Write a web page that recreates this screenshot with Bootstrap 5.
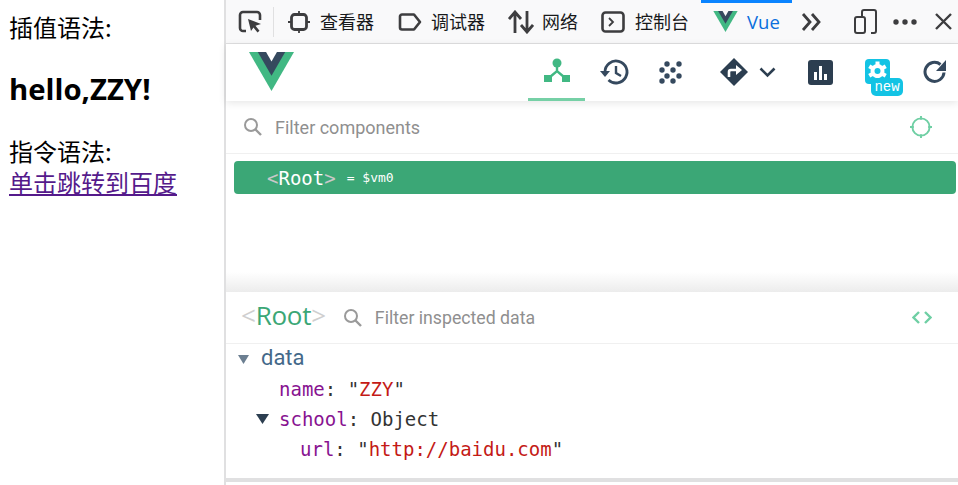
<!DOCTYPE html>
<html lang="zh">
<head>
<meta charset="utf-8">
<title>Vue devtools</title>
<link href="https://cdn.jsdelivr.net/npm/bootstrap@5.3.0/dist/css/bootstrap.min.css" rel="stylesheet">
<style>
html,body{height:485px;overflow:hidden;background:#fff}
.shell{height:485px;font-family:"Noto Sans CJK SC","Liberation Sans",sans-serif}
.page-pane{width:224px;flex:none;padding:11px 0 0 9px;font-size:24px;line-height:32px;color:#000;font-family:"Noto Sans CJK SC",sans-serif}
.page-pane .hello{font-family:"Open Sans",sans-serif;font-weight:700;font-size:29.3px;line-height:38px;margin:28px 0 27px;letter-spacing:0}
.page-pane a{color:#551a8b;display:block;line-height:31px}
.page-pane .l1{height:31px}
.dev{width:734px;flex:none;border-left:2px solid #e0e0e1}
.tools{height:44px;background:#f9f9fa;border-bottom:1px solid #e0e0e1;font-size:18px;color:#18191a;flex:none}
.tools svg{display:block;flex:none}
.tab{height:43px;display:flex;align-items:center;flex:none}
.sepr{width:1px;height:30px;background:#e0e0e1;flex:none}
.vuetab{width:91px;height:43px;border-top:3px solid #0a84ff;color:#0a6fdd;font-family:"Open Sans",sans-serif;font-size:18.5px;padding-left:12px;gap:9px;margin-left:12px;padding-bottom:3px}
.vhead{height:57px;flex:none;position:relative;z-index:2;box-shadow:0 2px 8px rgba(0,0,0,.1)}
.vhead svg{display:block;flex:none}
.active-tab{width:57px;height:57px;border-bottom:3px solid #76d0a6;margin-left:234px}
.search{height:53px;flex:none;border-bottom:1px solid #f0f0f0;color:#8f8f8f;font-family:Roboto,sans-serif;font-size:18px;padding:0 0 0 17px}
.tree{height:138px;flex:none;padding:7px 2px 0 8px;background:linear-gradient(#fff 118px,#ececec 138px)}
.rootrow{height:33px;background:#3ba776;border-radius:4px;color:#fff;padding:1px 0 0 33px;font-family:"DejaVu Sans Mono",monospace}
.rootrow .nm{font-size:19px}
.rootrow .br{color:#c8c8c8;font-size:19px}
.rootrow .eq{font-size:13px;margin-left:11px}
.insp{height:52px;flex:none;border-bottom:1px solid #f0f0f0;padding-left:15px;font-family:Roboto,sans-serif;color:#8f8f8f;font-size:17.7px}
.insp .tg{font-family:"Open Sans",sans-serif;font-size:26px;color:#cfcfcf;letter-spacing:-.25px;line-height:1;margin:-6px 17px 0 0}
.insp .tg b{font-weight:400;color:#3ba776}
.state{flex:1;font-family:"DejaVu Sans Mono",monospace;font-size:19px;color:#333;position:relative}
.drow{height:30px;white-space:pre}
.drow svg{flex:none}
.dname{font-family:Roboto,sans-serif;font-size:22px;color:#44698a;margin:-4px 0 0 12px}
.k{color:#881391}
.v{color:#c41a16}
.l0{padding-left:12px}.l1b{padding-left:53px}.l2{padding-left:30px}
.l3{padding-left:74px}
.endline{height:4px;background:#e0e0e1;flex:none;margin-bottom:3px}
.newtag{left:6px;top:19px;width:32px;background:#13c3e4;color:#fff;font:14px/18px "Liberation Mono",monospace;text-align:center;border-radius:5px;white-space:nowrap}
.gearbox{margin:15px 0 0 32px;width:25px;height:25px}
</style>
</head>
<body>
<div class="shell d-flex">
  <div class="page-pane">
    <div class="l1">插值语法:</div>
    <div class="hello">hello,ZZY!</div>
    <div class="l1">指令语法:</div>
    <a href="#">单击跳转到百度</a>
  </div>
  <div class="dev d-flex flex-column">
    <div class="tools d-flex align-items-center">
      <svg style="margin-left:12px" width="24" height="24" viewBox="0 0 24 24"><path d="M8 21H5a3 3 0 0 1-3-3V5a3 3 0 0 1 3-3h14a3 3 0 0 1 3 3v5" fill="none" stroke="#3d3d3f" stroke-width="2.6"/><path d="M10 9l13 5-5.500 1.800 4 5-2 1.700-4-5-2.500 3.500z" fill="#3d3d3f"/></svg>
      <div class="sepr" style="margin-left:11px"></div>
      <svg style="margin-left:13px" width="24" height="24" viewBox="0 0 24 24"><rect x="4.500" y="4.500" width="15" height="15" rx="3" fill="none" stroke="#3d3d3f" stroke-width="2.800"/><path d="M12 1v3M12 20v3M1 12h3M20 12h3" stroke="#3d3d3f" stroke-width="1.800"/></svg>
      <div class="tab" style="margin-left:9px">查看器</div>
      <svg style="margin-left:24px" width="24" height="20" viewBox="0 0 24 20"><path d="M4 2.500h12l6 7.500-6 7.500H4a2 2 0 0 1-2-2v-11a2 2 0 0 1 2-2z" fill="none" stroke="#3d3d3f" stroke-width="2.600" stroke-linejoin="round"/></svg>
      <div class="tab" style="margin-left:9px">调试器</div>
      <svg style="margin-left:23px" width="26" height="24" viewBox="0 0 26 24"><path d="M7 23V3M1 9l6-7 6 7M19 1v20M13 15l6 7 6-7" fill="none" stroke="#3d3d3f" stroke-width="2.800"/></svg>
      <div class="tab" style="margin-left:8px">网络</div>
      <svg style="margin-left:23px" width="24" height="22" viewBox="0 0 24 22"><rect x="1.500" y="1.500" width="21" height="19" rx="3" fill="none" stroke="#3d3d3f" stroke-width="2.600"/><path d="M8 7l4 4-4 4" fill="none" stroke="#3d3d3f" stroke-width="1.800"/></svg>
      <div class="tab" style="margin-left:10px">控制台</div>
      <div class="tab vuetab">
        <svg width="25" height="21" viewBox="0 0 256 221"><path d="M0 0h256L128 221z" fill="#41b883"/><path d="M50 0h156l-78 134z" fill="#35495e"/><path d="M97 0h62l-31 54z" fill="#f9f9fa"/></svg>
        <span>Vue</span>
      </div>
      <svg style="margin-left:9px" width="20" height="20" viewBox="0 0 20 20"><path d="M2 2l7 8-7 8M11 2l7 8-7 8" fill="none" stroke="#3d3d3f" stroke-width="2.800"/></svg>
      <svg style="margin-left:33px" width="23" height="25" viewBox="0 0 23 25"><path d="M8 8V3a2 2 0 0 1 2-2h10a2 2 0 0 1 2 2v19a2 2 0 0 1-2 2h-3" fill="none" stroke="#3d3d3f" stroke-width="2"/><rect x="1" y="8" width="10" height="16" rx="2" fill="none" stroke="#3d3d3f" stroke-width="2"/></svg>
      <svg style="margin-left:16px" width="24" height="6" viewBox="0 0 24 6"><circle cx="3" cy="3" r="2.700" fill="#3d3d3f"/><circle cx="12" cy="3" r="2.700" fill="#3d3d3f"/><circle cx="21" cy="3" r="2.700" fill="#3d3d3f"/></svg>
      <svg style="margin-left:18px" width="17" height="17" viewBox="0 0 17 17"><path d="M1 1l15 15M16 1L1 16" stroke="#3d3d3f" stroke-width="2.400"/></svg>
    </div>
    <div class="vhead d-flex bg-white">
      <svg style="margin:8px 0 0 23px" width="45" height="39" viewBox="0 0 256 221"><path d="M0 0h256L128 221z" fill="#41b883"/><path d="M50 0h156l-78 134z" fill="#35495e"/><path d="M97 0h62l-31 54z" fill="#fff"/></svg>
      <div class="active-tab d-flex justify-content-center align-items-center">
        <svg style="margin-top:-2px" width="26" height="25" viewBox="0 0 26 25"><circle cx="13" cy="5" r="4.500" fill="#41b883"/><rect x="0" y="17" width="8" height="7" fill="#41b883"/><rect x="18" y="17" width="8" height="7" fill="#41b883"/><path d="M13 8v6M6 19l7-6 7 6" fill="none" stroke="#41b883" stroke-width="2.400"/></svg>
      </div>
      <svg style="margin:14px 0 0 15px" width="30" height="28" viewBox="0 0 30 28"><path d="M5 14a11 11 0 1 1 3.500 8" fill="none" stroke="#35495e" stroke-width="2.800"/><path d="M0 13h10l-5 6z" fill="#35495e"/><path d="M16 8v7l5 3" fill="none" stroke="#35495e" stroke-width="2.400"/></svg>
      <svg style="margin:17px 0 0 29px" width="24" height="23" viewBox="0 0 24 23"><g fill="#35495e"><circle cx="8" cy="3" r="2.700"/><circle cx="20" cy="3" r="2.700"/><circle cx="3" cy="9" r="2.700"/><circle cx="14" cy="9" r="2.700"/><circle cx="8" cy="15" r="2.700"/><circle cx="20" cy="15" r="2.700"/><circle cx="3" cy="20" r="2.700"/><circle cx="14" cy="20" r="2.700"/></g></svg>
      <svg style="margin:14px 0 0 37px" width="28" height="28" viewBox="0 0 28 28"><path d="M14 0l14 14-14 14L0 14z" fill="#2c3e50"/><path d="M9 19v-5a2 2 0 0 1 2-2h6" fill="none" stroke="#fff" stroke-width="2.600"/><path d="M16 7l6 5-6 5z" fill="#fff"/></svg>
      <svg style="margin:23px 0 0 11px" width="17" height="11" viewBox="0 0 17 11"><path d="M1.500 1.500l7 7 7-7" fill="none" stroke="#2c3e50" stroke-width="2.600"/></svg>
      <svg style="margin:16px 0 0 32px" width="25" height="25" viewBox="0 0 25 25"><rect width="25" height="25" rx="3" fill="#2c3e50"/><path d="M6 12h3v8H6zM11 6h3v14h-3zM16 14h3v6h-3z" fill="#fff"/></svg>
      <div class="gearbox position-relative">
        <svg class="d-block" width="25" height="25" viewBox="0 0 25 25"><rect width="25" height="25" rx="4" fill="#13c3e4"/><g fill="#fff"><circle cx="12.500" cy="12" r="7"/><rect x="10.500" y="2.500" width="4" height="19"/><rect x="10.500" y="2.500" width="4" height="19" transform="rotate(60 12.500 12)"/><rect x="10.500" y="2.500" width="4" height="19" transform="rotate(120 12.500 12)"/></g><circle cx="12.500" cy="12" r="3" fill="#13c3e4"/></svg>
        <span class="newtag position-absolute">new</span>
      </div>
      <svg style="margin:16px 0 0 33px" width="24" height="24" viewBox="0 0 24 24"><path d="M21 12.500A9.500 9.500 0 1 1 17.500 4.500" fill="none" stroke="#35495e" stroke-width="3"/><path d="M23 0v11h-10z" fill="#35495e"/></svg>
    </div>
    <div class="search d-flex align-items-center">
      <svg width="20" height="20" viewBox="0 0 20 20"><circle cx="8" cy="8" r="6" fill="none" stroke="#9a9a9a" stroke-width="2"/><path d="M12.500 12.500l5.500 5.500" stroke="#9a9a9a" stroke-width="2.400"/></svg>
      <span style="margin-left:12px;padding-top:1px">Filter components</span>
      <svg class="ms-auto" style="margin-right:26px" width="22" height="22" viewBox="0 0 23 23"><circle cx="11.500" cy="11.500" r="9" fill="none" stroke="#6fcfa4" stroke-width="2"/><path d="M11.500 0v4M11.500 19v4M0 11.500h4M19 11.500h4" stroke="#6fcfa4" stroke-width="2"/></svg>
    </div>
    <div class="tree">
      <div class="rootrow d-flex align-items-center">
        <span class="br">&lt;</span><span class="nm">Root</span><span class="br">&gt;</span><span class="eq">= $vm0</span>
      </div>
    </div>
    <div class="insp d-flex align-items-center">
      <span class="tg">&lt;<b>Root</b>&gt;</span>
      <svg width="20" height="20" viewBox="0 0 20 20"><circle cx="8" cy="8" r="6" fill="none" stroke="#9a9a9a" stroke-width="2"/><path d="M12.500 12.500l5.500 5.500" stroke="#9a9a9a" stroke-width="2.400"/></svg>
      <span style="margin-left:12px;padding-top:1px">Filter inspected data</span>
      <svg class="ms-auto" style="margin-right:26px" width="20" height="13" viewBox="0 0 20 13"><path d="M7 1L1.500 6.500 7 12M13 1l5.500 5.500L13 12" fill="none" stroke="#6fcfa4" stroke-width="2.400"/></svg>
    </div>
    <div class="state">
      <div class="drow d-flex align-items-center l0"><svg width="11" height="9" viewBox="0 0 11 9"><path d="M0 0h11L5.500 9z" fill="#6c7f91"/></svg><span class="dname">data</span></div>
      <div class="drow d-flex align-items-center l1b"><span class="k">name</span>: "<span class="v">ZZY</span>"</div>
      <div class="drow d-flex align-items-center l2"><svg width="13" height="10" viewBox="0 0 13 10" style="margin-right:10px"><path d="M0 0h13L6.500 10z" fill="#2c3e50"/></svg><span class="k">school</span>: Object</div>
      <div class="drow d-flex align-items-center l3"><span class="k">url</span>: "<span class="v">http://baidu.com</span>"</div>
    </div>
    <div class="endline"></div>
  </div>
</div>
</body>
</html>
